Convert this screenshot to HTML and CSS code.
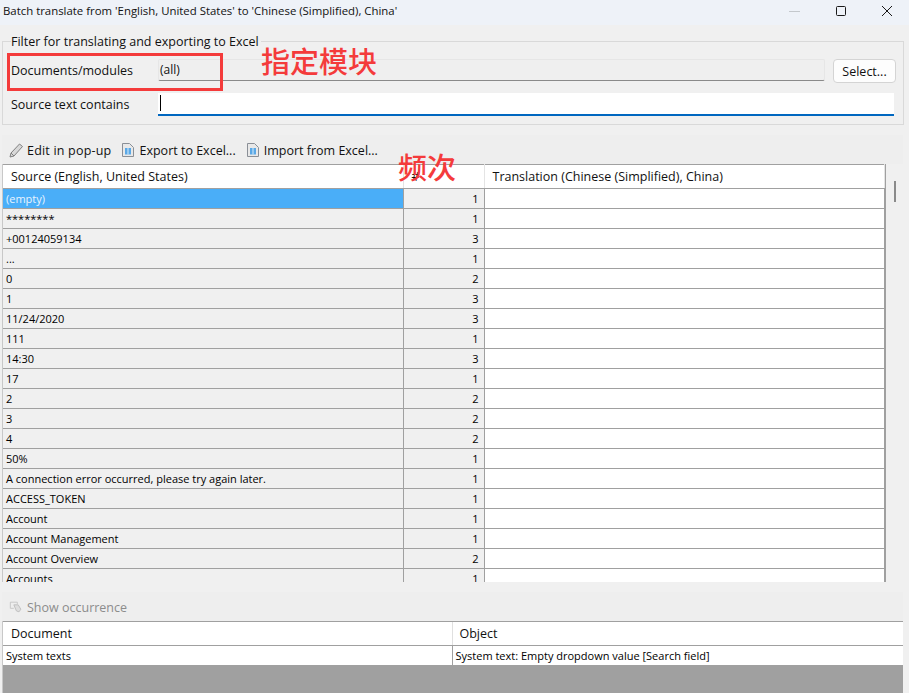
FILE: index.html
```html
<!DOCTYPE html>
<html>
<head lang="en">
    <meta charset="UTF-8">
    <title>Batch translate</title>
    <link rel="stylesheet" href="styles.css">
</head>
<body>
<div class="titlebar">
    <span class="title-text">Batch translate from 'English, United States' to 'Chinese (Simplified), China'</span>
    <div class="win-btns">
        <svg class="win-icon" width="12" height="12" viewBox="0 0 12 12"><path d="M0 6.500H11" stroke="#c4c8cc" fill="none"/></svg>
        <svg class="win-icon" width="12" height="12" viewBox="0 0 12 12"><rect x="1.500" y="1.500" width="9" height="9" rx="1" stroke="#1a1a1a" fill="none"/></svg>
        <svg class="win-icon" width="12" height="12" viewBox="0 0 12 12"><path d="M1 1L11 11M11 1L1 11" stroke="#1a1a1a" fill="none"/></svg>
    </div>
</div>

<fieldset class="filter">
    <legend>Filter for translating and exporting to Excel</legend>
    <div class="filter-row">
        <label class="filter-label">Documents/modules</label>
        <div class="readonly-field">(all)</div>
        <button class="select-btn">Select...</button>
    </div>
    <div class="filter-row">
        <label class="filter-label">Source text contains</label>
        <div class="text-input"><span class="caret"></span></div>
    </div>
</fieldset>

<div class="toolbar toolbar-top">
    <span class="tool tool-edit">
        <svg width="14" height="16" viewBox="0 0 14 16"><path d="M1 15l1-4 8.500-9 3 2.500L5 14z" fill="#d8d8d8" stroke="#808080"/><path d="M2 11l3 3" stroke="#808080" fill="none"/></svg>
        Edit in pop-up
    </span>
    <span class="tool tool-doc">
        <svg width="12" height="14" viewBox="0 0 12 14"><path d="M.5.500h7l4 4v9H.5z" fill="#e8e8e8" stroke="#8a8f96"/><rect x="3" y="5" width="6" height="6.500" fill="#5aa8e6"/><path d="M6 5v6.500" stroke="#d8ecfa" fill="none"/></svg>
        Export to Excel...
    </span>
    <span class="tool tool-doc">
        <svg width="12" height="14" viewBox="0 0 12 14"><path d="M.5.500h7l4 4v9H.5z" fill="#e8e8e8" stroke="#8a8f96"/><rect x="3" y="5" width="6" height="6.500" fill="#5aa8e6"/><path d="M6 5v6.500" stroke="#d8ecfa" fill="none"/></svg>
        Import from Excel...
    </span>
</div>

<div class="main-area">
    <div class="grid-wrap">
        <table class="grid">
            <colgroup><col class="col-src"><col class="col-num"><col class="col-trans"></colgroup>
            <thead>
                <tr><th>Source (English, United States)</th><th>#</th><th>Translation (Chinese (Simplified), China)</th></tr>
            </thead>
            <tbody>
                <tr class="selected"><td class="src">(empty)</td><td class="num">1</td><td></td></tr>
                <tr><td class="src">********</td><td class="num">1</td><td></td></tr>
                <tr><td class="src">+00124059134</td><td class="num">3</td><td></td></tr>
                <tr><td class="src">...</td><td class="num">1</td><td></td></tr>
                <tr><td class="src">0</td><td class="num">2</td><td></td></tr>
                <tr><td class="src">1</td><td class="num">3</td><td></td></tr>
                <tr><td class="src">11/24/2020</td><td class="num">3</td><td></td></tr>
                <tr><td class="src">111</td><td class="num">1</td><td></td></tr>
                <tr><td class="src">14:30</td><td class="num">3</td><td></td></tr>
                <tr><td class="src">17</td><td class="num">1</td><td></td></tr>
                <tr><td class="src">2</td><td class="num">2</td><td></td></tr>
                <tr><td class="src">3</td><td class="num">2</td><td></td></tr>
                <tr><td class="src">4</td><td class="num">2</td><td></td></tr>
                <tr><td class="src">50%</td><td class="num">1</td><td></td></tr>
                <tr><td class="src">A connection error occurred, please try again later.</td><td class="num">1</td><td></td></tr>
                <tr><td class="src">ACCESS_TOKEN</td><td class="num">1</td><td></td></tr>
                <tr><td class="src">Account</td><td class="num">1</td><td></td></tr>
                <tr><td class="src">Account Management</td><td class="num">1</td><td></td></tr>
                <tr><td class="src">Account Overview</td><td class="num">2</td><td></td></tr>
                <tr><td class="src">Accounts</td><td class="num">1</td><td></td></tr>
            </tbody>
        </table>
    </div>
    <div class="scrollbar"><div class="thumb"></div></div>
</div>

<div class="toolbar toolbar-bottom">
    <span class="tool tool-disabled">
        <svg width="14" height="14" viewBox="0 0 16 16"><path d="M1.500 2.500h8v2M1.500 2.500v7h4" fill="none" stroke="#c4c4c4"/><path d="M5.500 5.500h5l3 5-2 3-3-1z" fill="#dedede" stroke="#bcbcbc"/></svg>
        Show occurrence
    </span>
</div>

<div class="occ-wrap">
    <table class="occ">
        <colgroup><col class="col-doc"><col></colgroup>
        <thead><tr><th>Document</th><th>Object</th></tr></thead>
        <tbody><tr><td>System texts</td><td>System text: Empty dropdown value [Search field]</td></tr></tbody>
    </table>
    <div class="occ-empty"></div>
</div>

<div class="note note-box"></div>
<div class="note note-text note-modules">指定模块</div>
<div class="note note-text note-freq">频次</div>
</body>
</html>
```

FILE: styles.css
```css
*{
    margin: 0;
    padding: 0;
    box-sizing: border-box;
}
html,body{
    height: 693px;
    overflow: hidden;
}
body{
    position: relative;
    background: #f0f0f0;
    font-family: "Open Sans", "Noto Sans", sans-serif;
    font-size: 12.5px;
    color: #111;
}

.titlebar{
    height: 25px;
    background: #eef2f8;
    display: flex;
    align-items: center;
    justify-content: space-between;
    padding: 0 16px 4px 3px;
}
.title-text{
    font-size: 11.4px;
    margin-top: -1px;
}
.win-btns{
    display: flex;
    gap: 34px;
    align-items: center;
}
.win-icon{
    display: block;
}

.filter{
    margin: 7px 6px 0 2px;
    height: 93px;
    border: 1px solid #d9d9d9;
    padding: 0 7px 0 8px;
}
.filter legend{
    padding: 2px 2px 0 0;
    line-height: 16px;
}
.filter-row{
    display: flex;
    align-items: flex-start;
    margin-top: 10px;
}
.filter legend + .filter-row{
    margin-top: 9px;
}
.filter-label{
    width: 147px;
    line-height: 23px;
}
.readonly-field{
    width: 667px;
    height: 22px;
    background: #efefef;
    border: 1px solid #e6e6e6;
    border-bottom: 1px solid #8a8a8a;
    border-radius: 2px;
    padding-left: 1px;
    font-size: 12px;
    line-height: 20px;
}
.select-btn{
    margin-left: 8px;
    width: 63px;
    height: 24px;
    background: #fdfdfd;
    border: 1px solid #d4d4d4;
    border-radius: 4px;
    font: inherit;
    color: inherit;
}
.text-input{
    width: 736px;
    height: 23px;
    background: #fff;
    border-bottom: 2px solid #0067c0;
    padding: 2px 0 0 2px;
}
.caret{
    display: block;
    width: 1px;
    height: 16px;
    background: #000;
}

.toolbar{
    display: flex;
    align-items: center;
    background: #eeeeee;
    margin: 10px 6px 0 2px;
    padding: 1px 0 0 7px;
    height: 29px;
}
.toolbar-top{
    gap: 11px;
}
.tool{
    display: flex;
    align-items: center;
    gap: 4px;
}
.tool-edit{
    letter-spacing: .2px;
}
.tool-doc{
    gap: 5px;
}
.tool svg{
    flex: none;
}
.tool-disabled{
    color: #8c8c8c;
}

.main-area{
    display: flex;
    height: 418px;
}
.grid-wrap{
    margin-left: 2px;
    width: 884px;
    height: 418px;
    overflow: hidden;
    border-left: 1px solid #c8c8c8;
    border-right: 1px solid #a0a0a0;
}
.grid,.occ{
    width: 100%;
    border-collapse: collapse;
    table-layout: fixed;
}
.col-src{ width: 400px; }
.col-num{ width: 81px; }
.grid th,.occ th{
    height: 24px;
    background: #fff;
    font-weight: normal;
    text-align: left;
    padding-left: 8px;
    border-top: 1px solid #a0a0a0;
    border-bottom: 1px solid #a0a0a0;
    border-right: 1px solid #e4e4e4;
    overflow: hidden;
}
.grid td{
    height: 20px;
    font-size: 11px;
    line-height: 14px;
    color: #000;
    background: #fff;
    border-bottom: 1px solid #a0a0a0;
    border-right: 1px solid #a0a0a0;
    padding: 0 3px;
    white-space: nowrap;
    overflow: hidden;
}
.grid td.src,.grid td.num{
    background: #f0f0f0;
}
.grid td.num{
    text-align: right;
    padding-right: 5px;
}
.grid tr.selected td.src{
    background: #4aaef8;
    color: #e8f4ff;
}
.scrollbar{
    width: 17px;
    padding: 17px 0 0 8px;
}
.thumb{
    width: 2px;
    height: 21px;
    background: #8a8a8a;
}

.occ-wrap{
    margin: 0 6px 0 2px;
    border-left: 1px solid #c8c8c8;
}
.col-doc{ width: 449px; }
.occ th{
    border-right: none;
}
.occ th + th{
    border-left: 1px solid #e0e0e0;
    padding-left: 7px;
}
.occ td{
    height: 19px;
    font-size: 11px;
    color: #000;
    background: #fff;
    padding: 0 3px;
    white-space: nowrap;
    overflow: hidden;
}
.occ td + td{
    border-left: 1px solid #a0a0a0;
}
.occ-empty{
    height: 28px;
    background: #a0a0a0;
}

.note{
    position: absolute;
}
.note-box{
    left: 7px;
    top: 53px;
    width: 216px;
    height: 38px;
    border: 3px solid #f43b3b;
}
.note-text{
    color: #f43b3b;
    font-family: "Noto Sans CJK SC", sans-serif;
    font-weight: 500;
    line-height: 1;
}
.note-modules{
    left: 261px;
    top: 46px;
    font-size: 29px;
}
.note-freq{
    left: 398px;
    top: 152px;
    font-size: 29px;
}
```
